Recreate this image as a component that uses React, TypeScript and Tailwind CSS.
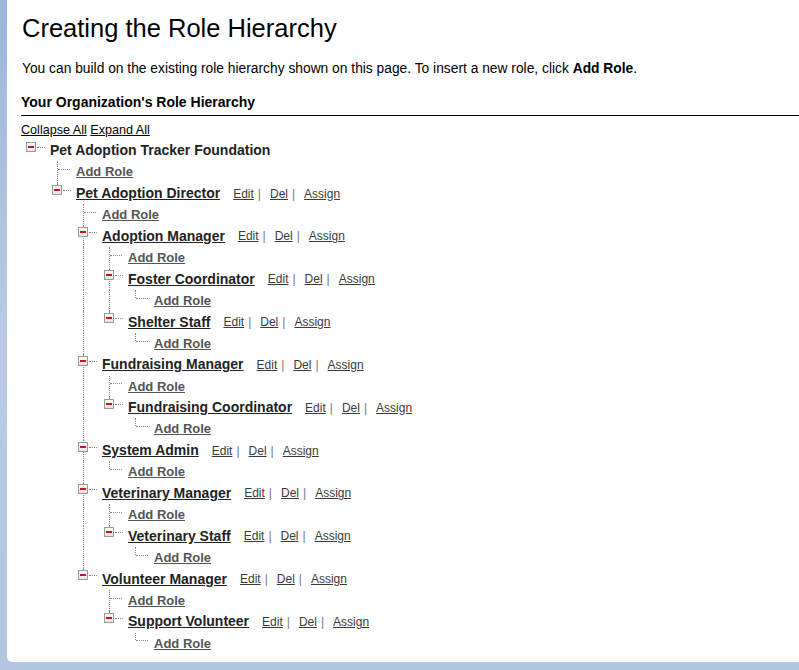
import React from "react";

type RoleNode = {
  name: string;
  children: RoleNode[];
};

type Row = {
  name: string;
  kind: "root" | "role" | "add";
  depth: number;
  lines: boolean[];
  hasNext: boolean;
};

const hierarchy: RoleNode = {
  name: "Pet Adoption Tracker Foundation",
  children: [
    {
      name: "Pet Adoption Director",
      children: [
        {
          name: "Adoption Manager",
          children: [
            { name: "Foster Coordinator", children: [] },
            { name: "Shelter Staff", children: [] },
          ],
        },
        {
          name: "Fundraising Manager",
          children: [{ name: "Fundraising Coordinator", children: [] }],
        },
        { name: "System Admin", children: [] },
        {
          name: "Veterinary Manager",
          children: [{ name: "Veterinary Staff", children: [] }],
        },
        {
          name: "Volunteer Manager",
          children: [{ name: "Support Volunteer", children: [] }],
        },
      ],
    },
  ],
};

// flatten the tree into rows, keeping track of which ancestor columns still need a line
function flatten(
  node: RoleNode | null,
  depth: number,
  lines: boolean[],
  hasNext: boolean,
  out: Row[]
) {
  if (!node) {
    out.push({ name: "Add Role", kind: "add", depth, lines, hasNext });
    return;
  }
  out.push({
    name: node.name,
    kind: depth === 0 ? "root" : "role",
    depth,
    lines,
    hasNext,
  });
  const kids: (RoleNode | null)[] = [null, ...node.children];
  kids.forEach((kid, i) =>
    flatten(kid, depth + 1, [...lines, hasNext], i < kids.length - 1, out)
  );
}

const rows: Row[] = [];
flatten(hierarchy, 0, [], false, rows);

const dotV = "absolute left-[10px] border-l border-dotted border-[#8a8a8a]";
const dotH = "absolute border-t border-dotted border-[#8a8a8a]";

function MinusBox() {
  return (
    <span className="absolute left-[5px] top-[calc(50%-9px)] w-[10px] h-[10px] border border-[#9a9a9a] bg-gradient-to-b from-white to-[#e6e6e6] flex items-center justify-center">
      <span className="block w-[6px] h-[2px] bg-[#c4161c]" />
    </span>
  );
}

function OwnColumn({ row }: { row: Row }) {
  if (row.kind === "add") {
    return (
      <div className="relative w-[26px] h-full shrink-0">
        <span
          className={`${dotV} top-0 ${
            row.hasNext ? "bottom-0" : "h-[calc(50%-3px)]"
          }`}
        />
        <span className={`${dotH} left-[11px] w-[12px] top-[calc(50%-3px)]`} />
      </div>
    );
  }
  return (
    <div className="relative w-[26px] h-full shrink-0">
      {row.kind === "role" && (
        <span
          className={`${dotV} top-0 ${
            row.hasNext ? "bottom-0" : "h-[calc(50%-9px)]"
          }`}
        />
      )}
      <MinusBox />
      <span className={`${dotH} left-[16px] w-[8px] top-[calc(50%-4px)]`} />
    </div>
  );
}

function Actions() {
  return (
    <span className="ml-[13px] text-[12px] text-[#3a3a3a] whitespace-nowrap">
      <a href="#" className="underline">
        Edit
      </a>
      <span className="ml-[4px] text-[#777]">|</span>
      <a href="#" className="ml-[9px] underline">
        Del
      </a>
      <span className="ml-[4px] text-[#777]">|</span>
      <a href="#" className="ml-[9px] underline">
        Assign
      </a>
    </span>
  );
}

function TreeRow({ row }: { row: Row }) {
  return (
    <div className="flex items-center h-[21.43px]">
      {row.lines.map((on, i) => (
        <div key={i} className="relative w-[26px] h-full shrink-0">
          {on && <span className={`${dotV} top-0 bottom-0`} />}
        </div>
      ))}
      <OwnColumn row={row} />
      <div className="ml-[3px] flex items-center whitespace-nowrap">
        {row.kind === "root" && (
          <span className="text-[14px] font-bold text-[#222]">{row.name}</span>
        )}
        {row.kind === "role" && (
          <>
            <a href="#" className="text-[14px] font-bold text-[#222] underline">
              {row.name}
            </a>
            <Actions />
          </>
        )}
        {row.kind === "add" && (
          <a href="#" className="text-[13px] font-bold text-[#555] underline">
            Add Role
          </a>
        )}
      </div>
    </div>
  );
}

export default function App() {
  return (
    <div className="w-[799px] h-[670px] bg-[#b3c6e0] flex font-['Liberation_Sans',Arial,sans-serif] overflow-hidden">
      <div className="w-[7px] shrink-0 bg-gradient-to-b from-[#9db6d8] via-[#b9cbe4] to-[#b3c6e0]" />
      <main className="flex-1 h-[662px] bg-white rounded-bl-[5px] pl-[14px] pt-[14px] overflow-hidden">
        <h1 className="ml-[1px] text-[25.5px] leading-[29px] text-black font-normal">
          Creating the Role Hierarchy
        </h1>
        <p className="mt-[18px] ml-[1px] text-[13.8px] leading-[16px] text-black">
          You can build on the existing role hierarchy shown on this page. To
          insert a new role, click <b>Add Role</b>.
        </p>
        <h2 className="mt-[17px] text-[14px] leading-[16px] font-bold text-black pb-[5px] border-b border-black">
          Your Organization's Role Hierarchy
        </h2>
        <div className="mt-[7px] text-[12.6px] leading-[15px] text-black">
          <a href="#" className="underline">
            Collapse All
          </a>{" "}
          <a href="#" className="underline">
            Expand All
          </a>
        </div>
        <div className="mt-[2px]">
          {rows.map((row, i) => (
            <TreeRow key={i} row={row} />
          ))}
        </div>
      </main>
    </div>
  );
}
